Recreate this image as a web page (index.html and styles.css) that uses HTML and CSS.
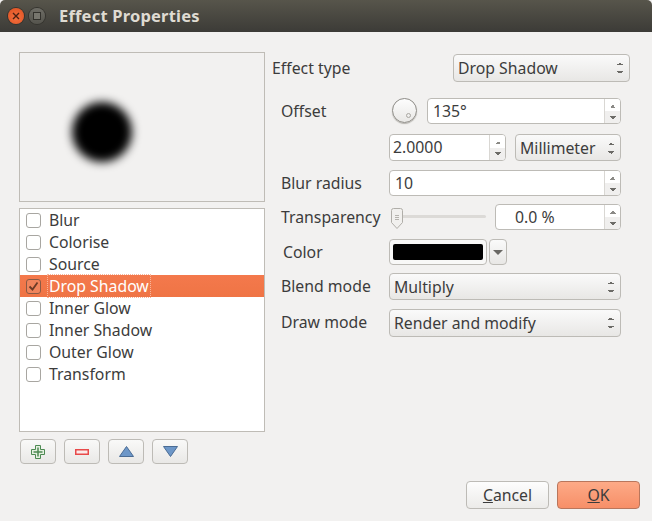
FILE: index.html
```html
<!DOCTYPE html>
<html lang="en">
  <head>
    <meta charset="utf-8">
    <title>Effect Properties</title>
    <link rel="stylesheet" href="styles.css">
  </head>
  <body>
    <div class="titlebar">
      <div class="win-btn win-close">
        <svg width="8" height="8" viewBox="0 0 8 8"><path d="M1 1L7 7M7 1L1 7" stroke="#4a2012" stroke-width="1.4"/></svg>
      </div>
      <div class="win-btn win-max"><span class="win-max-box"></span></div>
      <div class="title">Effect Properties</div>
    </div>

    <div class="content">
      <div class="left">
        <div class="preview"><div class="shadow"></div></div>
        <div class="effect-list">
          <div class="effect"><span class="check"></span><span class="effect-name">Blur</span></div>
          <div class="effect"><span class="check"></span><span class="effect-name">Colorise</span></div>
          <div class="effect"><span class="check"></span><span class="effect-name">Source</span></div>
          <div class="effect selected">
            <span class="check">
              <svg width="13" height="13" viewBox="0 0 13 13"><path d="M2.500 6.500L5.500 9.500L10.500 2.500" fill="none" stroke="#6b3a26" stroke-width="1.800"/></svg>
            </span>
            <span class="effect-name">Drop Shadow</span>
          </div>
          <div class="effect"><span class="check"></span><span class="effect-name">Inner Glow</span></div>
          <div class="effect"><span class="check"></span><span class="effect-name">Inner Shadow</span></div>
          <div class="effect"><span class="check"></span><span class="effect-name">Outer Glow</span></div>
          <div class="effect"><span class="check"></span><span class="effect-name">Transform</span></div>
        </div>
        <div class="list-tools">
          <div class="tool-btn">
            <svg width="16" height="16" viewBox="0 0 16 16"><path d="M5.500 1.500H10.500V5.500H14.500V10.500H10.500V14.500H5.500V10.500H1.500V5.500H5.500Z" fill="#e4efe0" stroke="#4d8a52"/><path d="M8 3.500V12.500M3.500 8H12.500" stroke="#4d8a52" stroke-width="1.500"/></svg>
          </div>
          <div class="tool-btn">
            <svg width="14" height="6" viewBox="0 0 14 6"><rect x="0.750" y="0.750" width="12.500" height="4.500" fill="#fbeaea" stroke="#e84a4a" stroke-width="1.500"/></svg>
          </div>
          <div class="tool-btn">
            <svg width="15" height="11" viewBox="0 0 15 11"><path d="M7.500 0.500L14.500 10.500H0.500Z" fill="#6d97c8" stroke="#4a6c94"/></svg>
          </div>
          <div class="tool-btn">
            <svg width="15" height="11" viewBox="0 0 15 11"><path d="M7.500 10.500L14.500 0.500H0.500Z" fill="#6d97c8" stroke="#4a6c94"/></svg>
          </div>
        </div>
      </div>

      <div class="right">
        <div class="type-row">
          <span class="label">Effect type</span>
          <div class="combo type-combo"><span class="combo-text">Drop Shadow</span><span class="arrows"></span></div>
        </div>
        <div class="form">
          <span class="label">Offset</span>
          <div class="field angle-field">
            <div class="dial"><span class="dial-dot"></span></div>
            <div class="spin grow h26"><span class="spin-value">135°</span><span class="spin-btns"></span></div>
          </div>

          <span></span>
          <div class="field offset-field">
            <div class="spin offset-spin h27"><span class="spin-value tight">2.0000</span><span class="spin-btns"></span></div>
            <div class="combo grow h27"><span class="combo-text">Millimeter</span><span class="arrows"></span></div>
          </div>

          <span class="label">Blur radius</span>
          <div class="field">
            <div class="spin grow h26"><span class="spin-value">10</span><span class="spin-btns"></span></div>
          </div>

          <span class="label">Transparency</span>
          <div class="field transparency-field">
            <div class="slider">
              <svg class="slider-handle" width="12" height="21" viewBox="0 0 12 21"><path d="M2.500 0.500H9.500Q11.500 0.500 11.500 2.500V14.500L6 20.500L0.500 14.500V2.500Q0.500 0.500 2.500 0.500Z" fill="#f1f0ee" stroke="#b0aea9"/><path d="M4 7.500H8M4 9.500H8M4 11.500H8" stroke="#b5b3ae"/></svg>
            </div>
            <div class="spin grow h26"><span class="spin-value percent">0.0 %</span><span class="spin-btns"></span></div>
          </div>

          <span class="label color-label">Color</span>
          <div class="field color-field">
            <div class="color-btn"><span class="swatch"></span></div>
            <div class="color-drop"></div>
          </div>

          <span class="label">Blend mode</span>
          <div class="field">
            <div class="combo grow h27"><span class="combo-text">Multiply</span><span class="arrows"></span></div>
          </div>

          <span class="label">Draw mode</span>
          <div class="field">
            <div class="combo grow h28"><span class="combo-text">Render and modify</span><span class="arrows"></span></div>
          </div>
        </div>
      </div>
    </div>

    <div class="footer">
      <div class="btn"><span class="btn-text"><u>C</u>ancel</span></div>
      <div class="btn btn-ok"><span class="btn-text"><u>O</u>K</span></div>
    </div>
  </body>
</html>
```

FILE: styles.css
```css
html, body {
  height: 100%;
}
body {
  margin: 0;
  background-color: #f2f1f0;
  color: #3c3c3c;
  font-family: "Noto Sans", sans-serif;
  font-size: 15.8px;
  display: flex;
  flex-direction: column;
  overflow: hidden;
}
.titlebar {
  height: 32px;
  background: linear-gradient(#57554b, #3c3b37);
  border-radius: 5px 5px 0 0;
  display: flex;
  align-items: center;
  padding-left: 8px;
  flex-shrink: 0;
}
.win-btn {
  width: 16px;
  height: 16px;
  border-radius: 50%;
  display: flex;
  align-items: center;
  justify-content: center;
  margin-right: 5px;
}
.win-close {
  background: radial-gradient(circle at 50% 60%, #f4703f, #dd4f1f);
  box-shadow: 0 0 0 1px #35342f;
}
.win-max {
  background: linear-gradient(#6e6d66, #55544d);
  box-shadow: 0 0 0 1px #35342f;
}
.win-max-box {
  width: 6px;
  height: 6px;
  border: 1px solid #32312c;
  background: #77766e;
}
.title {
  margin-left: 9px;
  color: #dfdbd2;
  font-weight: bold;
  font-size: 16.5px;
  letter-spacing: 0.2px;
  padding-bottom: 1px;
}
.content {
  display: flex;
  padding: 20px 0 0 19px;
  flex: 1;
}
.left {
  width: 246px;
  margin-right: 7px;
  display: flex;
  flex-direction: column;
}
.preview {
  border: 1px solid #bfbcb6;
  background: #f2f1f0;
  padding: 49px 0 0 52px;
  box-sizing: border-box;
  height: 150px;
}
.shadow {
  width: 60px;
  height: 60px;
  border-radius: 50%;
  background: #000;
  filter: blur(5px);
}
.effect-list {
  margin-top: 6px;
  height: 224px;
  box-sizing: border-box;
  border: 1px solid #bfbcb6;
  background: #fff;
}
.effect {
  height: 22px;
  display: flex;
  align-items: center;
  padding-left: 6px;
}
.check {
  width: 13px;
  height: 13px;
  border: 1px solid #a8a6a1;
  border-radius: 3px;
  background: #fff;
  margin-right: 7px;
  flex-shrink: 0;
  display: flex;
}
.effect-name {
  padding: 0 1px;
  line-height: 22px;
}
.selected {
  background: linear-gradient(#f4794c, #ef7445);
  color: #fff;
}
.selected .check {
  background: #f0845c;
  border-color: #8a5a45;
}
.selected .effect-name {
  outline: 1px dotted #f7b69c;
}
.list-tools {
  display: flex;
  gap: 8px;
  margin: 7px 0 0 1px;
}
.tool-btn {
  width: 36px;
  height: 25px;
  box-sizing: border-box;
  border: 1px solid #bdbbb6;
  border-radius: 4px;
  background: linear-gradient(#f9f9f8, #e9e8e6);
  display: flex;
  align-items: center;
  justify-content: center;
}
.right {
  width: 358px;
  display: flex;
  flex-direction: column;
}
.type-row {
  display: flex;
  justify-content: space-between;
  align-items: center;
  margin-top: 2px;
}
.type-combo {
  width: 177px;
  height: 28px;
}
.form {
  display: grid;
  grid-template-columns: 108px 232px;
  grid-template-rows: 36px 36px 34px 35px 34px 36px 28px;
  margin: 16px 0 0 9px;
  align-items: start;
}
.form .label {
  height: 26px;
  line-height: 26px;
}
.color-label {
  margin-left: 2px;
}
.field {
  display: flex;
  gap: 9px;
}
.grow {
  flex: 1;
  min-width: 0;
}
.h26 { height: 26px; }
.h27 { height: 27px; }
.h28 { height: 28px; }
.combo {
  box-sizing: border-box;
  border: 1px solid #bdbbb6;
  border-radius: 4px;
  background: linear-gradient(#fafafa, #e8e7e5);
  display: flex;
  align-items: center;
  justify-content: space-between;
  padding: 0 6px 0 4px;
}
.arrows {
  width: 6px;
  height: 12px;
  flex-shrink: 0;
  background:
    linear-gradient(to top left, #6b6a66 50%, transparent 50%) 0 0 / 3px 3px no-repeat,
    linear-gradient(to top right, #6b6a66 50%, transparent 50%) 3px 0 / 3px 3px no-repeat,
    linear-gradient(to bottom left, #6b6a66 50%, transparent 50%) 0 100% / 3px 3px no-repeat,
    linear-gradient(to bottom right, #6b6a66 50%, transparent 50%) 3px 100% / 3px 3px no-repeat;
}
.spin {
  box-sizing: border-box;
  border: 1px solid #bdbbb6;
  border-radius: 4px;
  background: #fff;
  display: flex;
  overflow: hidden;
}
.spin-value {
  flex: 1;
  padding-left: 5px;
  line-height: 24px;
}
.tight {
  padding-left: 3px;
}
.percent {
  padding-left: 19px;
}
.spin-btns {
  width: 15px;
  border-left: 1px solid #d9d7d3;
  background:
    linear-gradient(to top left, #8b8a86 50%, transparent 50%) 5px 6px / 3px 3px no-repeat,
    linear-gradient(to top right, #8b8a86 50%, transparent 50%) 8px 6px / 3px 3px no-repeat,
    linear-gradient(to bottom left, #6d6c68 50%, transparent 50%) 4px 17px / 4px 3px no-repeat,
    linear-gradient(to bottom right, #6d6c68 50%, transparent 50%) 8px 17px / 4px 3px no-repeat,
    linear-gradient(#fff 50%, #f0efee 50%);
}
.angle-field {
  gap: 10px;
  padding-left: 3px;
}
.dial {
  width: 25px;
  height: 25px;
  box-sizing: border-box;
  border: 1px solid #8e8c87;
  border-radius: 50%;
  background: linear-gradient(#fdfdfd, #e9e8e6);
  box-shadow: 0 1px 1px #b5b3ae;
  position: relative;
}
.dial-dot {
  position: absolute;
  left: 13px;
  top: 14px;
  width: 3px;
  height: 3px;
  border: 1px solid #a9a7a2;
  border-radius: 50%;
}
.offset-spin {
  width: 117px;
}
.transparency-field {
  gap: 9px;
  padding-left: 2px;
}
.slider {
  width: 95px;
  height: 26px;
  position: relative;
}
.slider::before {
  content: "";
  position: absolute;
  left: 10px;
  right: 0;
  top: 11px;
  height: 3px;
  border-radius: 2px;
  background: #dcdad7;
}
.slider-handle {
  position: absolute;
  left: 0;
  top: 4px;
}
.color-field {
  gap: 2px;
}
.color-btn {
  width: 98px;
  height: 26px;
  box-sizing: border-box;
  border: 1px solid #bdbbb6;
  border-radius: 4px;
  background: #f8f8f7;
  padding: 4px 3px;
}
.swatch {
  display: block;
  height: 16px;
  border-radius: 2px;
  background: #000;
}
.color-drop {
  width: 18px;
  height: 26px;
  box-sizing: border-box;
  border: 1px solid #bdbbb6;
  border-radius: 4px;
  background: linear-gradient(#fafafa, #e8e7e5);
  display: flex;
  align-items: center;
  justify-content: center;
}
.color-drop::after {
  content: "";
  border-left: 5px solid transparent;
  border-right: 5px solid transparent;
  border-top: 5px solid #6a6965;
  margin-top: 1px;
}
.footer {
  display: flex;
  justify-content: flex-end;
  gap: 8px;
  padding: 0 12px 12px 0;
  flex-shrink: 0;
}
.btn {
  width: 83px;
  height: 28px;
  box-sizing: border-box;
  border: 1px solid #bdbbb6;
  border-radius: 4px;
  background: linear-gradient(#fdfdfd, #ecebe9);
  display: flex;
  align-items: center;
  justify-content: center;
}
.btn-ok {
  background: linear-gradient(#fdaa87, #f78f68);
  border-color: #b9765c;
}
```
